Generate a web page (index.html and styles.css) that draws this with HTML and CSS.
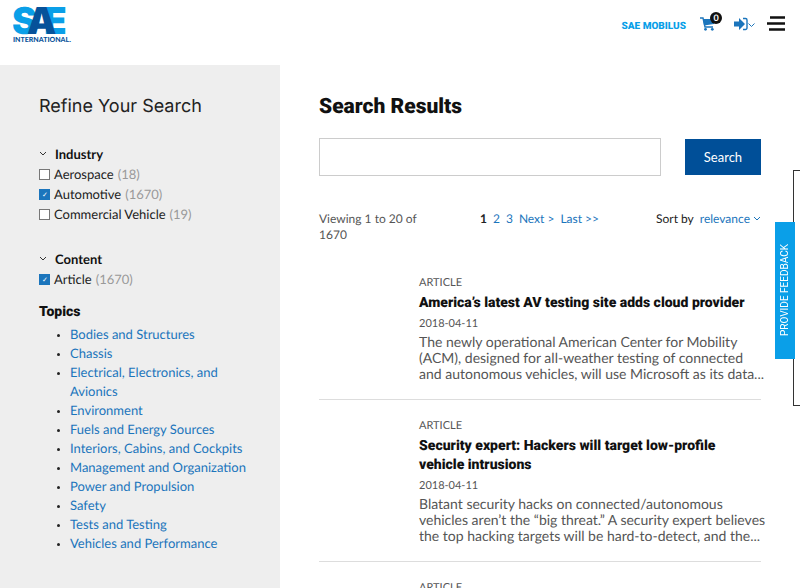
FILE: index.html
```html
<!DOCTYPE html>
<html lang="en">
<head>
    <meta charset="UTF-8">
    <meta name="viewport" content="width=device-width, initial-scale=1.0">
    <title>Search Results - SAE International</title>
    <link rel="stylesheet" href="styles.css">
</head>
<body>

    <header class="site-header">
        <a class="logo" href="#" aria-label="SAE International">
            <svg width="60" height="38" viewBox="0 0 60 38">
                <text class="logo-letter" x="-1" y="28" fill="#0a9fe8">S</text>
                <text class="logo-letter" x="31" y="28" fill="#0a9fe8">E</text>
                <text class="logo-letter" x="14" y="28" fill="#06529a">A</text>
                <text class="logo-name" x="0" y="36">INTERNATIONAL.</text>
            </svg>
        </a>
        <nav class="header-nav">
            <a class="mobilus" href="#">SAE MOBILUS</a>
            <a class="cart" href="#" aria-label="Cart">
                <svg width="16" height="14" viewBox="0 0 16 14">
                    <path d="M0 1h3l2 9h8" fill="none" stroke="#1b75bc" stroke-width="1.4"/>
                    <path d="M3 2h12l-1 5-10 1.500z" fill="#1b75bc"/>
                    <circle cx="5.500" cy="12.300" r="1.400" fill="#1b75bc"/>
                    <circle cx="12.300" cy="12.300" r="1.400" fill="#1b75bc"/>
                </svg>
                <span class="badge">0</span>
            </a>
            <a class="login" href="#" aria-label="Log in">
                <svg width="22" height="14" viewBox="0 0 22 14">
                    <path d="M0 4.500h5V1l6 6-6 6V9.500H0z" fill="#1b75bc"/>
                    <path d="M9 1.500h2.500a1.500 1.500 0 0 1 1.500 1.500v8a1.500 1.500 0 0 1-1.500 1.500H9" fill="none" stroke="#1b75bc" stroke-width="1.400"/>
                    <path d="M14.500 6.500l3 3 3-3" fill="none" stroke="#1b75bc"/>
                </svg>
            </a>
            <button class="menu" type="button" aria-label="Menu">
                <svg width="18" height="16" viewBox="0 0 18 16">
                    <path d="M3 1.500h15M0 7.500h18M2 13.500h16" stroke="#111" stroke-width="2.600"/>
                </svg>
            </button>
        </nav>
    </header>

    <div class="page">
        <aside class="sidebar">
            <h2>Refine Your Search</h2>

            <section class="filter">
                <h3><svg class="chevron" width="8" height="6" viewBox="0 0 8 6"><path d="M1 1l3 3 3-3" fill="none" stroke="#333"/></svg>Industry</h3>
                <label><input type="checkbox"> Aerospace <span>(18)</span></label>
                <label><input type="checkbox" checked> Automotive <span>(1670)</span></label>
                <label><input type="checkbox"> Commercial Vehicle <span>(19)</span></label>
            </section>

            <section class="filter">
                <h3><svg class="chevron" width="8" height="6" viewBox="0 0 8 6"><path d="M1 1l3 3 3-3" fill="none" stroke="#333"/></svg>Content</h3>
                <label><input type="checkbox" checked> Article <span>(1670)</span></label>
            </section>

            <h4>Topics</h4>
            <ul class="topics">
                <li><a href="#">Bodies and Structures</a></li>
                <li><a href="#">Chassis</a></li>
                <li><a href="#">Electrical, Electronics, and Avionics</a></li>
                <li><a href="#">Environment</a></li>
                <li><a href="#">Fuels and Energy Sources</a></li>
                <li><a href="#">Interiors, Cabins, and Cockpits</a></li>
                <li><a href="#">Management and Organization</a></li>
                <li><a href="#">Power and Propulsion</a></li>
                <li><a href="#">Safety</a></li>
                <li><a href="#">Tests and Testing</a></li>
                <li><a href="#">Vehicles and Performance</a></li>
            </ul>
        </aside>

        <main class="results">
            <h1>Search Results</h1>
            <form class="search">
                <input type="text" aria-label="Search">
                <button type="submit">Search</button>
            </form>

            <div class="toolbar">
                <div class="count">Viewing 1 to 20 of 1670</div>
                <div class="pager">
                    <b>1</b>
                    <a href="#">2</a>
                    <a href="#">3</a>
                    <a href="#">Next &gt;</a>
                    <a href="#">Last &gt;&gt;</a>
                </div>
                <div class="sort">
                    <span>Sort by</span>
                    <a href="#">relevance <svg width="8" height="6" viewBox="0 0 8 6"><path d="M1 1l3 3 3-3" fill="none" stroke="#1b75bc"/></svg></a>
                </div>
            </div>

            <article>
                <div class="type">ARTICLE</div>
                <h2>America’s latest AV testing site adds cloud provider</h2>
                <div class="date">2018-04-11</div>
                <p>The newly operational American Center for Mobility (ACM), designed for all-weather testing of connected and autonomous vehicles, will use Microsoft as its data...</p>
            </article>
            <article>
                <div class="type">ARTICLE</div>
                <h2>Security expert: Hackers will target low-profile vehicle intrusions</h2>
                <div class="date">2018-04-11</div>
                <p>Blatant security hacks on connected/autonomous vehicles aren’t the “big threat.” A security expert believes the top hacking targets will be hard-to-detect, and the...</p>
            </article>
            <article>
                <div class="type">ARTICLE</div>
            </article>
        </main>
    </div>

    <div class="feedback-panel"></div>
    <button class="feedback" type="button">PROVIDE FEEDBACK</button>

</body>
</html>
```
FILE: styles.css
```css
* {
    box-sizing: border-box;
}
body {
    margin: 0;
    font-family: Lato, sans-serif;
    font-size: 13px;
    color: #222;
    background-color: #fff;
    text-rendering: geometricPrecision;
}
a {
    color: #1b75bc;
    text-decoration: none;
}
h1, h2, h3, h4, p, ul {
    margin: 0;
}
button {
    font-family: inherit;
    border: none;
    cursor: pointer;
}
svg {
    display: block;
}

/* header */
.site-header {
    display: flex;
    justify-content: space-between;
    height: 65px;
    padding: 6px 15px 0 13px;
}
.logo-letter {
    font-family: Inter, sans-serif;
    font-weight: 900;
    font-size: 37px;
}
.logo-name {
    font-family: Lato, sans-serif;
    font-weight: 900;
    font-size: 7px;
    fill: #06529a;
}
.header-nav {
    display: flex;
    align-items: center;
    height: 36px;
}
.mobilus {
    font-family: Roboto, sans-serif;
    font-weight: 900;
    font-size: 10px;
    color: #0a9fe8;
    margin: 4px 14px 0 0;
}
.cart {
    position: relative;
    margin-right: 18px;
}
.badge {
    position: absolute;
    top: -5px;
    right: -6px;
    width: 12px;
    height: 12px;
    border-radius: 50%;
    background-color: #111;
    color: #fff;
    font-size: 9px;
    font-weight: bold;
    line-height: 12px;
    text-align: center;
}
.login {
    margin-right: 11px;
}
.menu {
    padding: 0;
    background: none;
}

/* layout */
.page {
    display: grid;
    grid-template-columns: 35% 65%;
}
.sidebar {
    padding: 29px 39px 36px;
    background-color: #eee;
}
.results {
    padding: 29px 39px 0;
}

/* sidebar */
.sidebar h2 {
    font-family: Inter, sans-serif;
    font-size: 18px;
    font-weight: 400;
    line-height: 26px;
    margin-bottom: 24px;
}
.filter {
    margin-bottom: 25px;
}
.filter h3 {
    display: flex;
    align-items: center;
    font-size: 13px;
    line-height: 20px;
    color: #111;
}
.chevron {
    margin-right: 8px;
}
.filter label {
    display: flex;
    align-items: center;
    gap: 4px;
    line-height: 20px;
}
.filter label span {
    color: #999;
}
.filter input {
    appearance: none;
    width: 11px;
    height: 11px;
    margin: 0;
    border: 1px solid #777;
    background-color: #fff;
}
.filter input:checked {
    border-color: #1b75bc;
    background-color: #1b75bc;
}
.filter input:checked::after {
    content: "✓";
    display: block;
    color: #fff;
    font-size: 7px;
    line-height: 9px;
    text-align: center;
}
.sidebar h4 {
    font-family: Roboto, sans-serif;
    font-size: 14px;
    font-weight: 900;
    line-height: 20px;
    color: #111;
    margin: -12px 0 3px;
}
.topics {
    padding-left: 31px;
    margin-right: -10px;
    line-height: 19px;
}
.topics li::marker {
    font-size: 10px;
}

/* results */
.results h1 {
    font-family: Roboto, sans-serif;
    font-size: 21px;
    font-weight: 900;
    line-height: 26px;
    color: #111;
    margin-bottom: 18px;
}
.search {
    display: flex;
    align-items: center;
    gap: 24px;
}
.search input {
    flex: 1;
    min-width: 0;
    height: 38px;
    padding: 0 10px;
    border: 1px solid #ccc;
    font: inherit;
}
.search button {
    width: 76px;
    height: 36px;
    background-color: #004f98;
    color: #fff;
    font-size: 13px;
}
.toolbar {
    display: flex;
    justify-content: space-between;
    align-items: flex-start;
    font-size: 12px;
    line-height: 16px;
    margin: 35px 0 32px;
}
.count {
    width: 104px;
    color: #555;
}
.pager {
    display: flex;
    gap: 6px;
}
.sort {
    display: flex;
    gap: 6px;
}
.sort a {
    display: flex;
    align-items: center;
    gap: 3px;
}
article {
    padding: 0 0 17px 100px;
    margin-bottom: 18px;
    border-bottom: 1px solid #ddd;
    color: #555;
}
.type, .date {
    font-size: 11px;
    line-height: 16px;
}
article h2 {
    font-family: Roboto, sans-serif;
    font-size: 14px;
    font-weight: 900;
    line-height: 19px;
    color: #111;
    margin: 3px 0;
}
article p {
    font-size: 14px;
    line-height: 16px;
    margin: 2px -7px 0 0;
}

/* feedback */
.feedback-panel {
    position: fixed;
    top: 170px;
    right: -300px;
    width: 307px;
    height: 236px;
    border: 1px solid #333;
    background-color: #fff;
}
.feedback {
    position: fixed;
    top: 222px;
    right: 5px;
    width: 20px;
    height: 137px;
    padding: 0;
    background-color: #0a9fe8;
    color: #fff;
    font-family: Roboto, sans-serif;
    font-size: 10px;
    writing-mode: vertical-rl;
    transform: rotate(180deg);
}
```
